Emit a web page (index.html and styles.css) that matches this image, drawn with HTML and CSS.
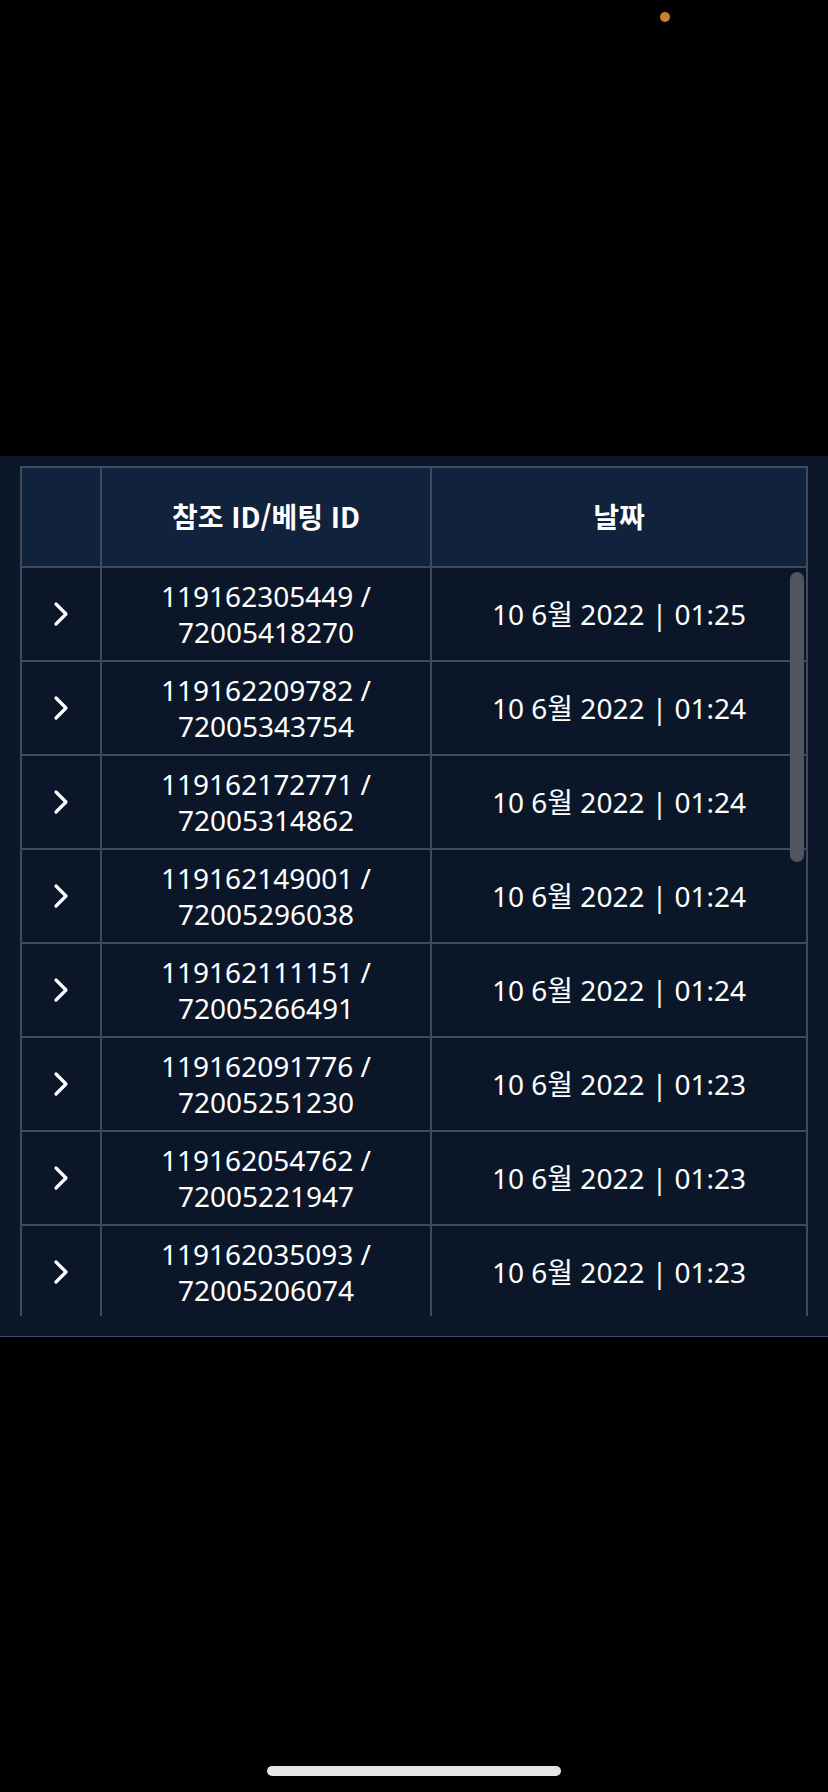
FILE: index.html
```html
<!DOCTYPE html>
<html lang="ko">
<head>
<meta charset="utf-8">
<link rel="stylesheet" href="styles.css">
</head>
<body>
<div class="screen">
  <div class="top">
    <span class="dot"></span>
  </div>
  <div class="panel">
    <div class="scroller">
      <div class="grid">
        <div class="hcell"></div>
        <div class="hcell">참조 ID/베팅 ID</div>
        <div class="hcell">날짜</div>

        <div class="cell"><svg class="chev" viewBox="0 0 16 26"><path d="M3 3 L13 13 L3 23"/></svg></div>
        <div class="cell">119162305449 /<br>72005418270</div>
        <div class="cell">10 6월 2022 | 01:25</div>

        <div class="cell"><svg class="chev" viewBox="0 0 16 26"><path d="M3 3 L13 13 L3 23"/></svg></div>
        <div class="cell">119162209782 /<br>72005343754</div>
        <div class="cell">10 6월 2022 | 01:24</div>

        <div class="cell"><svg class="chev" viewBox="0 0 16 26"><path d="M3 3 L13 13 L3 23"/></svg></div>
        <div class="cell">119162172771 /<br>72005314862</div>
        <div class="cell">10 6월 2022 | 01:24</div>

        <div class="cell"><svg class="chev" viewBox="0 0 16 26"><path d="M3 3 L13 13 L3 23"/></svg></div>
        <div class="cell">119162149001 /<br>72005296038</div>
        <div class="cell">10 6월 2022 | 01:24</div>

        <div class="cell"><svg class="chev" viewBox="0 0 16 26"><path d="M3 3 L13 13 L3 23"/></svg></div>
        <div class="cell">119162111151 /<br>72005266491</div>
        <div class="cell">10 6월 2022 | 01:24</div>

        <div class="cell"><svg class="chev" viewBox="0 0 16 26"><path d="M3 3 L13 13 L3 23"/></svg></div>
        <div class="cell">119162091776 /<br>72005251230</div>
        <div class="cell">10 6월 2022 | 01:23</div>

        <div class="cell"><svg class="chev" viewBox="0 0 16 26"><path d="M3 3 L13 13 L3 23"/></svg></div>
        <div class="cell">119162054762 /<br>72005221947</div>
        <div class="cell">10 6월 2022 | 01:23</div>

        <div class="cell"><svg class="chev" viewBox="0 0 16 26"><path d="M3 3 L13 13 L3 23"/></svg></div>
        <div class="cell">119162035093 /<br>72005206074</div>
        <div class="cell">10 6월 2022 | 01:23</div>
      </div>
      <div class="thumb"></div>
    </div>
  </div>
  <div class="bottom">
    <div class="home"></div>
  </div>
</div>
</body>
</html>
```

FILE: styles.css
```css
html, body {
  margin: 0;
  padding: 0;
  background: #000;
}
body {
  font-family: "Noto Sans", "Noto Sans CJK KR", sans-serif;
  color: #fff;
}
.screen {
  width: 828px;
  height: 1792px;
  display: flex;
  flex-direction: column;
  background: #000;
}
.top {
  height: 456px;
  position: relative;
  flex: none;
}
.dot {
  position: absolute;
  left: 660px;
  top: 12px;
  width: 10px;
  height: 10px;
  border-radius: 50%;
  background: #c8832f;
}
.panel {
  flex: none;
  background: #0c1828;
  padding: 10px 20px 20px;
  border-bottom: 1px solid #3a4a5f;
}
.scroller {
  position: relative;
  height: 850px;
  overflow: hidden;
}
.grid {
  display: grid;
  grid-template-columns: 78px 328px 374px;
  grid-auto-rows: 92px;
  grid-template-rows: 98px;
  gap: 2px;
  padding: 2px 2px 0;
  background: #3d4b60;
  width: 788px;
  box-sizing: border-box;
}
.hcell {
  background: #11223d;
  display: flex;
  align-items: center;
  justify-content: center;
  font-family: "Noto Sans CJK KR", "Noto Sans", sans-serif;
  font-weight: 700;
  font-size: 28px;
  padding-bottom: 2px;
}
.cell {
  background: #0b1729;
  display: flex;
  align-items: center;
  justify-content: center;
  text-align: center;
  font-size: 28px;
  line-height: 36px;
}
.chev {
  width: 16px;
  height: 26px;
  fill: none;
  stroke: #fff;
  stroke-width: 3.2;
  stroke-linecap: round;
  stroke-linejoin: round;
}
.thumb {
  position: absolute;
  right: 4px;
  top: 106px;
  width: 14px;
  height: 290px;
  border-radius: 7px;
  background: #50555e;
}
.bottom {
  flex: 1;
  display: flex;
  align-items: flex-end;
  justify-content: center;
  padding-bottom: 16px;
}
.home {
  width: 294px;
  height: 10px;
  border-radius: 5px;
  background: #e5e5e5;
}
```
